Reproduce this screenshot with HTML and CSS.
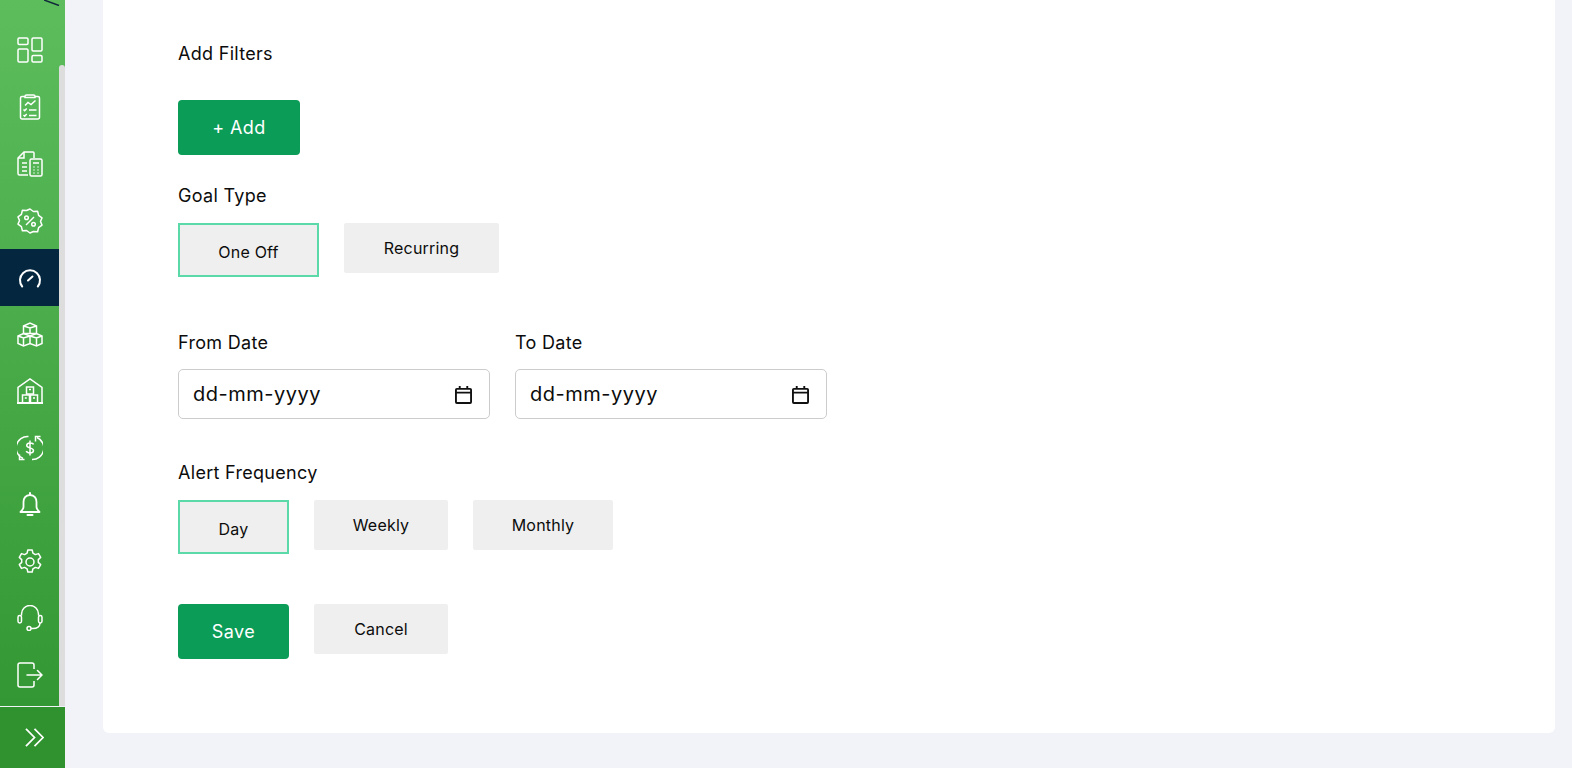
FILE: index.html
```html
<!DOCTYPE html>
<html lang="en">
<head>
    <meta charset="UTF-8">
    <title>Add Goal</title>
    <link rel="stylesheet" href="styles.css">
</head>
<body>
    <!-- Left: icon sidebar -->
    <aside class="sidebar">
        <div class="sidebar-scroll">
            <nav class="nav-list">
                <svg class="corner-mark" viewBox="0 0 16 6"><path d="M0 0L15 5.500" stroke="#10283a" stroke-width="1.500" fill="none"/></svg>
                <a class="nav-item"><svg class="icon" viewBox="0 0 26 26"><rect x="1" y="1" width="10" height="6.500" rx="1.200"/><rect x="1" y="12" width="10" height="13" rx="1.200"/><rect x="15" y="1" width="10" height="13" rx="1.200"/><rect x="15" y="18.500" width="10" height="6.500" rx="1.200"/></svg></a>
                <a class="nav-item"><svg class="icon" viewBox="0 0 26 26"><path d="M8 2.500H5a1.500 1.500 0 0 0-1.500 1.500v19.500A1.500 1.500 0 0 0 5 25h16a1.500 1.500 0 0 0 1.500-1.500V4A1.500 1.500 0 0 0 21 2.500h-3"/><path d="M8 3.500V2.500q0-1.500 1.500-1.500h7q1.500 0 1.500 1.500v1z"/><path d="M8 11.500l3-3 3 2 4.500-4"/><path d="M6.500 15.500l1.200 1.200 2-2.200M6.500 21l1.200 1.200 2-2.200M12 16h7.500M12 21.500h7.500"/></svg></a>
                <a class="nav-item"><svg class="icon" viewBox="0 0 26 26"><path d="M11 24H2.500a1.500 1.500 0 0 1-1.500-1.500V7l6-6h9a1 1 0 0 1 1 1v5"/><path d="M1 7h6V1"/><path d="M5 12h5M5 16h5M5 20h5"/><rect x="13" y="8" width="12" height="17" rx="1.500"/><path d="M16 12h6M16.500 16h1M20.500 16h1M16.500 19h1M20.500 19h1M16.500 22h1M20.500 22h1"/></svg></a>
                <a class="nav-item"><svg class="icon" viewBox="0 0 26 26"><path d="M13 1l3.400 2.500 4.200-.2 1 4.100 3.400 2.500-1.500 3.600 1.500 3.600-3.400 2.500-1 4.100-4.200-.2L13 25l-3.400-2.500-4.200.2-1-4.100L1 16.100l1.500-3.600L1 8.900l3.400-2.500 1-4.100 4.200.2z" stroke-linejoin="round"/><path d="M9 17L17 9"/><circle cx="9.500" cy="9.800" r="1.800"/><circle cx="16.500" cy="16.200" r="1.800"/></svg></a>
                <a class="nav-item active"><svg class="icon" viewBox="0 0 26 26"><path d="M5.200 21.500a10 10 0 1 1 15.600 0" stroke-width="2" stroke-linecap="round"/><path d="M11 15.500l4.500-4" stroke-width="2" stroke-linecap="round"/></svg></a>
                <a class="nav-item"><svg class="icon" viewBox="0 0 26 26"><path d="M6.500 5l6.500-3 6.500 3v7.500h-13z"/><path d="M6.500 5l6.500 2 6.500-2M13 7v5.500"/><path d="M1 15l5.500-2.500L13 15l6.500-2.500L25 15v7.500L19.500 25 13 22.500 6.500 25 1 22.500z"/><path d="M1 15l5.500 2 6.500-2 6.500 2 5.500-2M6.500 17v8M19.500 17v8M13 15v7.500"/></svg></a>
                <a class="nav-item"><svg class="icon" viewBox="0 0 26 26"><path d="M1 25V9.500L13 1l12 8.500V25z"/><path d="M0 25h26" stroke-width="2"/><rect x="9.500" y="9" width="7" height="7"/><rect x="5.500" y="17" width="7" height="8"/><rect x="13.500" y="17" width="7" height="8"/><path d="M12 11.500h2M7.800 20h2M16 20h2"/></svg></a>
                <a class="nav-item"><svg class="icon" viewBox="0 0 26 26"><path d="M6 23.500A11.500 11.500 0 0 1 11.500 1.500"/><path d="M20 2.500A11.500 11.500 0 0 1 15 24.500"/><path d="M2.500 19.500v5h5M23.500 1.500h-5v5"/><path d="M16.500 9.500c-.5-2-6.500-2.500-6.800.8-.3 3.200 7 2 6.800 5.400-.2 3-6.500 2.800-7.200.3M13 5.500v15"/></svg></a>
                <a class="nav-item"><svg class="icon" viewBox="0 0 26 26"><path d="M13 3c-4.500 0-6.500 3.500-6.500 7v5c0 2-1.500 3.500-3 5h19c-1.500-1.500-3-3-3-5v-5c0-3.500-2-7-6.500-7z" stroke-linejoin="round" stroke-width="1.800"/><path d="M13 1v2M10.500 23h5" stroke-width="2" stroke-linecap="round"/></svg></a>
                <a class="nav-item"><svg class="icon" viewBox="0 0 26 26"><path d="M10.800 1h4.400l.7 3.200 2.500 1.400 3.100-1 2.200 3.800-2.400 2.200v2.800l2.400 2.200-2.200 3.800-3.100-1-2.500 1.400-.7 3.200h-4.400l-.7-3.200-2.500-1.400-3.100 1-2.200-3.800 2.400-2.200v-2.800L2.300 8.400l2.200-3.800 3.100 1 2.500-1.400z" stroke-linejoin="round"/><circle cx="13" cy="13" r="4"/></svg></a>
                <a class="nav-item"><svg class="icon" viewBox="0 0 26 26"><path d="M4.500 10.500V9a8.500 8.500 0 0 1 17 0v1.500"/><rect x="1" y="10.500" width="3.500" height="7.500" rx="1.700"/><rect x="21.500" y="10.500" width="3.500" height="7.500" rx="1.700"/><path d="M23 18c0 3.500-3 5.500-7 5.500h-2"/><circle cx="12" cy="23.500" r="2"/></svg></a>
                <a class="nav-item"><svg class="icon" viewBox="0 0 26 26"><path d="M17 7V3a2 2 0 0 0-2-2H3a2 2 0 0 0-2 2v20a2 2 0 0 0 2 2h12a2 2 0 0 0 2-2v-4"/><path d="M10 13h15M20.500 8.500L25 13l-4.500 4.500" stroke-linecap="round"/></svg></a>
            </nav>
            <div class="scroll-thumb"></div>
        </div>
        <div class="sidebar-footer">
            <svg class="chevrons" viewBox="0 0 20 20"><path d="M1 1l9 9-9 9M10 1l9 9-9 9"/></svg>
        </div>
    </aside>

    <!-- Right: goal form -->
    <main class="content">
        <div class="card">
            <div class="section-label">Add Filters</div>
            <button class="btn-primary btn-add">+ Add</button>

            <div class="section-label goal-label">Goal Type</div>
            <div class="option-row">
                <button class="option selected w-oneoff">One Off</button>
                <button class="option w-recurring">Recurring</button>
            </div>

            <div class="date-row">
                <div class="date-field">
                    <div class="section-label">From Date</div>
                    <div class="date-input">
                        <span>dd-mm-yyyy</span>
                        <svg class="cal-icon" viewBox="0 0 18 20"><path d="M2 4h14a1 1 0 0 1 1 1v13a1 1 0 0 1-1 1H2a1 1 0 0 1-1-1V5a1 1 0 0 1 1-1zM1 8h16" /><path d="M5 1v3M13 1v3"/></svg>
                    </div>
                </div>
                <div class="date-field">
                    <div class="section-label">To Date</div>
                    <div class="date-input">
                        <span>dd-mm-yyyy</span>
                        <svg class="cal-icon" viewBox="0 0 18 20"><path d="M2 4h14a1 1 0 0 1 1 1v13a1 1 0 0 1-1 1H2a1 1 0 0 1-1-1V5a1 1 0 0 1 1-1zM1 8h16" /><path d="M5 1v3M13 1v3"/></svg>
                    </div>
                </div>
            </div>

            <div class="section-label alert-label">Alert Frequency</div>
            <div class="option-row">
                <button class="option selected w-day">Day</button>
                <button class="option w-weekly">Weekly</button>
                <button class="option w-monthly">Monthly</button>
            </div>

            <div class="option-row action-row">
                <button class="btn-primary w-day">Save</button>
                <button class="option w-weekly">Cancel</button>
            </div>
        </div>
    </main>
</body>
</html>
```

FILE: styles.css
```css
html, body {
    height: 768px;
    overflow: hidden;
}

body {
    margin: 0;
    display: flex;
    background-color: #f1f3f8;
    font-family: Inter, "Noto Sans", sans-serif;
    color: #0c0c0c;
}

/* Sidebar */
.sidebar {
    width: 65px;
    flex-shrink: 0;
    display: flex;
    flex-direction: column;
    height: 768px;
}

.sidebar-scroll {
    height: 706px;
    display: flex;
    background: linear-gradient(180deg, #5dbd5d 0%, #339833 100%);
}

.nav-list {
    width: 59px;
    padding-top: 22px;
    box-sizing: border-box;
    position: relative;
}

.corner-mark {
    position: absolute;
    left: 44px;
    top: 0;
    width: 16px;
    height: 6px;
}

.nav-item {
    height: 56.8px;
    display: flex;
    align-items: center;
    justify-content: center;
}

.nav-item.active {
    background-color: #04273f;
}

.icon {
    width: 26px;
    height: 26px;
    fill: none;
    stroke: #ffffff;
    stroke-width: 1.500;
}

.scroll-thumb {
    width: 6px;
    margin-top: 65px;
    background-color: #dddddd;
    border-radius: 3px 3px 0 0;
}

.sidebar-footer {
    flex: 1;
    border-top: 1px solid #f1f3f8;
    background-color: #2f922f;
    display: flex;
    align-items: center;
    justify-content: center;
}

.chevrons {
    width: 19px;
    height: 19px;
    fill: none;
    stroke: #ffffff;
    stroke-width: 1.800;
    margin-left: 3px;
}

/* Card */
.content {
    flex: 1;
    padding: 0 17px 0 38px;
}

.card {
    height: 733px;
    box-sizing: border-box;
    background-color: #ffffff;
    border-radius: 0 0 6px 6px;
    padding: 40px 0 0 75px;
}

.section-label {
    font-size: 18px;
    line-height: 27px;
    letter-spacing: 0.3px;
}

.goal-label {
    margin-top: 27px;
}

.alert-label {
    margin-top: 40px;
}

/* Buttons */
button {
    font-family: inherit;
    cursor: pointer;
}

.btn-primary {
    height: 55px;
    border: none;
    border-radius: 4px;
    background-color: #0b9c58;
    color: #ffffff;
    font-size: 18px;
    letter-spacing: 0.4px;
    display: block;
}

.btn-add {
    width: 122px;
    margin-top: 33px;
}

.option-row {
    display: flex;
    align-items: flex-start;
    gap: 25px;
    margin-top: 14px;
}

.option {
    height: 50px;
    border: none;
    border-radius: 2px;
    background-color: #efefef;
    color: #0c0c0c;
    font-size: 16px;
    letter-spacing: 0.2px;
}

.option.selected {
    height: 54px;
    border: 2px solid #5bd9a9;
    border-radius: 0;
    padding-top: 4px;
}

.w-oneoff { width: 141px; }
.w-recurring { width: 155px; }
.w-day { width: 111px; }
.w-weekly { width: 134px; }
.w-monthly { width: 140px; }

.action-row {
    margin-top: 50px;
}

/* Date inputs */
.date-row {
    display: flex;
    gap: 25px;
    margin-top: 52px;
}

.date-field {
    width: 312px;
}

.date-input {
    height: 50px;
    margin-top: 13px;
    box-sizing: border-box;
    border: 1px solid #cccccc;
    border-radius: 5px;
    padding: 0 17px 0 14px;
    display: flex;
    align-items: center;
    justify-content: space-between;
    font-size: 20px;
    letter-spacing: 0.5px;
}

.cal-icon {
    width: 17px;
    height: 19px;
    fill: none;
    stroke: #111111;
    stroke-width: 2;
}
```
